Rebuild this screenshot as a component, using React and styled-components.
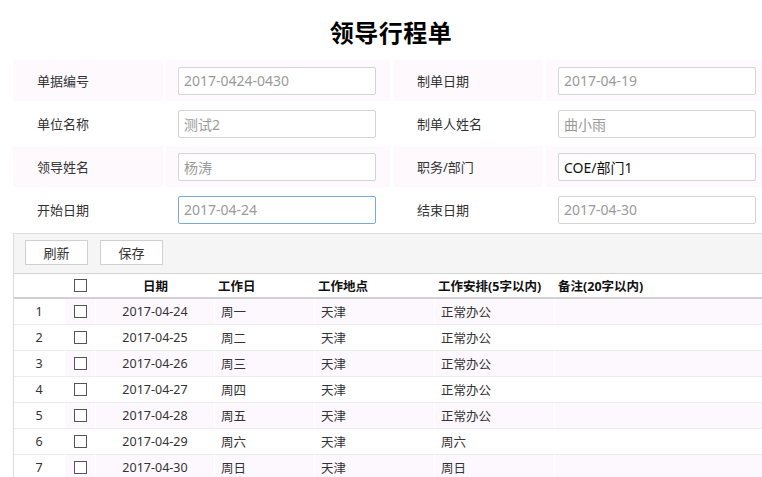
import styled, { createGlobalStyle } from "styled-components";

const GlobalStyle = createGlobalStyle`
	html, body {
		margin: 0;
		padding: 0;
		background: #fff;
		overflow: hidden;
	}
	body {
		font-family: "Noto Sans", "Noto Sans CJK SC", sans-serif;
		color: #333;
	}
`;

const fields = [
	[
		{ label: "单据编号", value: "2017-0424-0430" },
		{ label: "制单日期", value: "2017-04-19" },
	],
	[
		{ label: "单位名称", value: "测试2" },
		{ label: "制单人姓名", value: "曲小雨" },
	],
	[
		{ label: "领导姓名", value: "杨涛" },
		{ label: "职务/部门", value: "COE/部门1", editable: true },
	],
	[
		{ label: "开始日期", value: "2017-04-24", focused: true },
		{ label: "结束日期", value: "2017-04-30" },
	],
];

const days = ["周一", "周二", "周三", "周四", "周五", "周六", "周日"];
const rows = days.map((day, i) => ({
	no: i + 1,
	date: `2017-04-${24 + i}`,
	day,
	place: "天津",
	plan: i < 5 ? "正常办公" : day,
	note: "",
}));

function App() {
	return (
		<>
			<GlobalStyle />
			<Page>
				<Title>领导行程单</Title>
				<Form>
					{fields.map((pair, r) => (
						<FormRow key={r} $shaded={r % 2 === 0}>
							{pair.map((f) => (
								<Field key={f.label}>
									<Label>{f.label}</Label>
									<InputCell>
										<Input
											readOnly
											value={f.value}
											$editable={f.editable}
											$focused={f.focused}
										/>
									</InputCell>
								</Field>
							))}
						</FormRow>
					))}
				</Form>
				<Grid>
					<Toolbar>
						<ToolButton>刷新</ToolButton>
						<ToolButton>保存</ToolButton>
					</Toolbar>
					<HeadRow>
						<HeadCell />
						<HeadCell $center>
							<Check />
						</HeadCell>
						<HeadCell $center>日期</HeadCell>
						<HeadCell>工作日</HeadCell>
						<HeadCell>工作地点</HeadCell>
						<HeadCell>工作安排(5字以内)</HeadCell>
						<HeadCell>备注(20字以内)</HeadCell>
					</HeadRow>
					{rows.map((row, i) => (
						<BodyRow key={row.no} $shaded={i % 2 === 0}>
							<IndexCell>{row.no}</IndexCell>
							<Cell $center>
								<Check />
							</Cell>
							<Cell $center>{row.date}</Cell>
							<Cell>{row.day}</Cell>
							<Cell>{row.place}</Cell>
							<Cell>{row.plan}</Cell>
							<Cell>{row.note}</Cell>
						</BodyRow>
					))}
				</Grid>
			</Page>
		</>
	);
}

export default App;

const Page = styled.div`
	margin-left: 13px;
	width: 756px;
`;
const Title = styled.h1`
	margin: 0;
	height: 60px;
	padding-top: 5px;
	box-sizing: border-box;
	line-height: 55px;
	text-align: center;
	font-size: 24px;
	font-weight: 700;
	color: #000;
	letter-spacing: 0.5px;
`;
const Form = styled.div`
	display: flex;
	flex-direction: column;
	gap: 2px;
`;
const FormRow = styled.div`
	display: grid;
	grid-template-columns: 377px 1fr;
	gap: 3px;
	height: 41px;
	& > div > div {
		background: ${(p) => (p.$shaded ? "#fdf9fd" : "#fff")};
	}
`;
const Field = styled.div`
	display: grid;
	grid-template-columns: 150px 1fr;
	gap: 3px;
`;
const Label = styled.div`
	display: flex;
	align-items: center;
	padding-left: 24px;
	font-size: 13px;
	color: #333;
`;
const InputCell = styled.div`
	display: flex;
	align-items: center;
	padding-left: 12px;
`;
const Input = styled.input`
	width: 198px;
	height: 28px;
	box-sizing: border-box;
	padding: 0 5px;
	font-family: "Noto Sans", "Noto Sans CJK SC", sans-serif;
	font-size: 14px;
	color: ${(p) => (p.$editable ? "#111" : "#9a9a9a")};
	background: #fff;
	border: 1px solid ${(p) => (p.$focused ? "#7aa9dc" : "#d4d4d4")};
	border-radius: 2px;
	outline: none;
`;
const Grid = styled.div`
	margin-top: 3px;
	border-left: 1px solid #dcdcdc;
	border-top: 1px solid #dcdcdc;
	font-size: 12.5px;
`;
const Toolbar = styled.div`
	display: flex;
	gap: 12px;
	height: 40px;
	box-sizing: border-box;
	padding: 6px 0 0 11px;
	background: #f5f5f5;
	border-bottom: 1px solid #d4d4d4;
`;
const ToolButton = styled.button`
	width: 63px;
	height: 25px;
	background: #fff;
	border: 1px solid #d0d0d0;
	font-family: "Noto Sans", "Noto Sans CJK SC", sans-serif;
	font-size: 13px;
	color: #333;
	padding: 0;
`;
const columns = "51px 31px 119px 100px 120px 120px 1fr";
const HeadRow = styled.div`
	display: grid;
	grid-template-columns: ${columns};
	height: 25px;
	box-sizing: border-box;
	border-bottom: 2px solid #d0d0d0;
`;
const HeadCell = styled.div`
	display: flex;
	align-items: center;
	justify-content: ${(p) => (p.$center ? "center" : "flex-start")};
	padding-left: ${(p) => (p.$center ? 0 : 3)}px;
	font-weight: 700;
	color: #111;
`;
const BodyRow = styled.div`
	display: grid;
	grid-template-columns: ${columns};
	height: 26px;
	& > div {
		background: ${(p) => (p.$shaded ? "#fdf8fd" : "#fff")};
	}
`;
const Cell = styled.div`
	display: flex;
	align-items: center;
	justify-content: ${(p) => (p.$center ? "center" : "flex-start")};
	padding-left: ${(p) => (p.$center ? 0 : 6)}px;
	box-sizing: border-box;
	border-bottom: 1px solid #ececec;
	border-right: 1px solid #fff;
	color: #333;
`;
const IndexCell = styled(Cell)`
	justify-content: center;
	padding-left: 0;
	&& {
		background: #fff;
	}
`;
const Check = styled.span`
	display: inline-block;
	width: 11px;
	height: 11px;
	border: 1px solid #555;
	background: #fff;
`;
